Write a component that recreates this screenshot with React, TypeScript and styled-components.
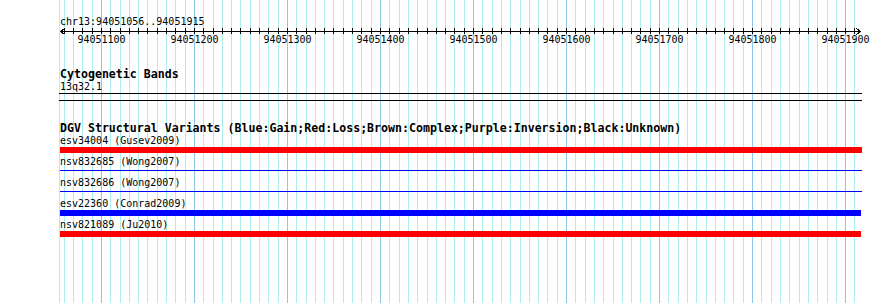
import React from "react"
import styled, { createGlobalStyle } from "styled-components"

const START = 94051056
const END = 94051915
const X0 = 60
const SCALE = 800 / (END - START + 1)
const xOf = (bp: number) => Math.round(X0 + (bp - START) * SCALE)

const gridStops: number[] = []
for (let bp = 94051060; bp <= 94051910; bp += 10) gridStops.push(bp)
const majorStops = gridStops.filter((bp) => bp % 100 === 0)

const features = [
  { name: "esv34004 (Gusev2009)", color: "#ff0000", width: 802, thin: false },
  { name: "nsv832685 (Wong2007)", color: "#0000ff", width: 802, thin: true },
  { name: "nsv832686 (Wong2007)", color: "#0000ff", width: 802, thin: true },
  { name: "esv22360 (Conrad2009)", color: "#0000ff", width: 801, thin: false },
  { name: "nsv821089 (Ju2010)", color: "#ff0000", width: 801, thin: false },
]

const MONO = `"DejaVu Sans Mono", "Liberation Mono", monospace`

const GlobalStyle = createGlobalStyle`
  html, body {
    margin: 0;
    padding: 0;
    background: #fff;
  }
  body {
    font-family: ${MONO};
    color: #000;
  }
`

const Panel = styled.div`
  position: relative;
  width: 890px;
  height: 303px;
  overflow: hidden;
  background: #fff;
`

const GridLayer = styled.svg`
  position: absolute;
  top: 0;
  left: 0;
  shape-rendering: crispEdges;
`

const Tracks = styled.div`
  position: relative;
  display: flex;
  flex-direction: column;
  padding-top: 17px;
`

const Track = styled.section<{ $gap?: number }>`
  display: flex;
  flex-direction: column;
  padding-left: 60px;
  margin-top: ${(p) => p.$gap ?? 0}px;
`

const SmallText = styled.div`
  font-size: 10px;
  line-height: 10px;
  padding-bottom: 1px;
  white-space: nowrap;
`

const TrackTitle = styled.div`
  font-size: 11.6px;
  line-height: 10px;
  padding-bottom: 2px;
  font-weight: bold;
  white-space: nowrap;
  margin-bottom: 1px;
`

const RulerSvg = styled.svg`
  display: block;
  shape-rendering: crispEdges;
  font-family: ${MONO};
  font-size: 10px;
`

const Band = styled.div`
  width: 803px;
  height: 6px;
  margin-left: -1px;
  border-top: 1px solid #000;
  border-bottom: 1px solid #000;
`

const Feature = styled.div`
  display: flex;
  flex-direction: column;
  padding-bottom: 4px;
`

const Glyph = styled.div<{ $color: string; $width: number; $thin: boolean }>`
  height: 6px;
  width: ${(p) => p.$width}px;
  background: ${(p) =>
    p.$thin
      ? `linear-gradient(${p.$color}, ${p.$color}) 0 2px / 100% 1px no-repeat`
      : p.$color};
`

function Grid() {
  return (
    <GridLayer width={890} height={303}>
      <rect x={59} y={0} width={1} height={303} fill="#afeeee" />
      {gridStops.map((bp) => (
        <rect
          key={bp}
          x={xOf(bp)}
          y={0}
          width={1}
          height={303}
          fill={bp % 100 === 0 ? "#8cc6ea" : "#afeeee"}
        />
      ))}
    </GridLayer>
  )
}

function Ruler() {
  return (
    <RulerSvg width={890} height={20}>
      <rect x={60} y={3} width={801} height={1} fill="#000" />
      {gridStops.map((bp) => (
        <rect key={bp} x={xOf(bp)} y={0} width={1} height={6} fill="#000" />
      ))}
      <path d="M64.5 0.5 L60.5 3.5 L64.5 6.5" fill="none" stroke="#000" strokeWidth={1} />
      <path d="M856.5 0.5 L860.5 3.5 L856.5 6.5" fill="none" stroke="#000" strokeWidth={1} />
      {majorStops.map((bp) => (
        <text key={bp} x={xOf(bp) + 0.5} y={15} textAnchor="middle" fill="#000">
          {bp}
        </text>
      ))}
    </RulerSvg>
  )
}

export default function App() {
  return (
    <>
      <GlobalStyle />
      <Panel>
        <Grid />
        <Tracks>
          <Track>
            <SmallText>chr13:94051056..94051915</SmallText>
          </Track>
          <Ruler />
          <Track $gap={21}>
            <TrackTitle>Cytogenetic Bands</TrackTitle>
            <SmallText>13q32.1</SmallText>
            <Band />
          </Track>
          <Track $gap={22}>
            <TrackTitle>
              DGV Structural Variants (Blue:Gain;Red:Loss;Brown:Complex;Purple:Inversion;Black:Unknown)
            </TrackTitle>
            {features.map((f) => (
              <Feature key={f.name}>
                <SmallText>{f.name}</SmallText>
                <Glyph $color={f.color} $width={f.width} $thin={f.thin} />
              </Feature>
            ))}
          </Track>
        </Tracks>
      </Panel>
    </>
  )
}
